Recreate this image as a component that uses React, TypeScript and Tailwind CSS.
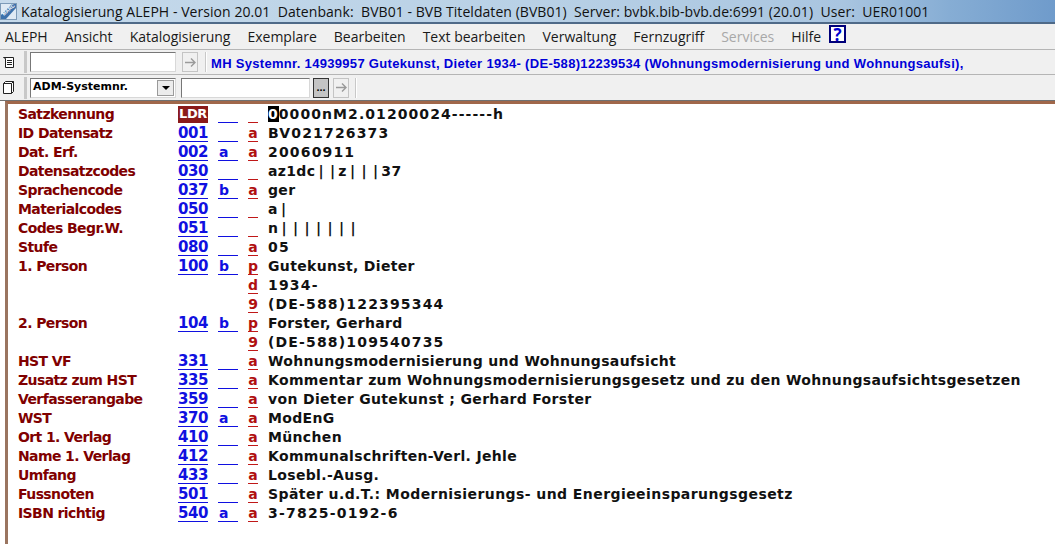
import React from 'react';

const menus = ['ALEPH', 'Ansicht', 'Katalogisierung', 'Exemplare', 'Bearbeiten', 'Text bearbeiten', 'Verwaltung', 'Fernzugriff', 'Services', 'Hilfe'];

const TEXT = 'tracking-[0.33px]';
const NUM = 'tracking-[1.15px]';

const rows: [string, string, string, string, string, string][] = [
  ['Satzkennung', 'LDR', '', '', '00000nM2.01200024------h', 'tracking-[1.07px]'],
  ['ID Datensatz', '001', '', 'a', 'BV021726373', NUM],
  ['Dat. Erf.', '002', 'a', 'a', '20060911', NUM],
  ['Datensatzcodes', '030', '', '', 'az1dc||z|||37', TEXT],
  ['Sprachencode', '037', 'b', 'a', 'ger', TEXT],
  ['Materialcodes', '050', '', '', 'a|', TEXT],
  ['Codes Begr.W.', '051', '', '', 'n|||||||', TEXT],
  ['Stufe', '080', '', 'a', '05', NUM],
  ['1. Person', '100', 'b', 'p', 'Gutekunst, Dieter', TEXT],
  ['', '', '', 'd', '1934-', NUM],
  ['', '', '', '9', '(DE-588)122395344', NUM],
  ['2. Person', '104', 'b', 'p', 'Forster, Gerhard', TEXT],
  ['', '', '', '9', '(DE-588)109540735', NUM],
  ['HST VF', '331', '', 'a', 'Wohnungsmodernisierung und Wohnungsaufsicht', TEXT],
  ['Zusatz zum HST', '335', '', 'a', 'Kommentar zum Wohnungsmodernisierungsgesetz und zu den Wohnungsaufsichtsgesetzen', TEXT],
  ['Verfasserangabe', '359', '', 'a', 'von Dieter Gutekunst ; Gerhard Forster', TEXT],
  ['WST', '370', 'a', 'a', 'ModEnG', TEXT],
  ['Ort 1. Verlag', '410', '', 'a', 'München', TEXT],
  ['Name 1. Verlag', '412', '', 'a', 'Kommunalschriften-Verl. Jehle', TEXT],
  ['Umfang', '433', '', 'a', 'Losebl.-Ausg.', TEXT],
  ['Fussnoten', '501', '', 'a', 'Später u.d.T.: Modernisierungs- und Energieeinsparungsgesetz', 'tracking-[0.42px]'],
  ['ISBN richtig', '540', 'a', 'a', '3-7825-0192-6', 'tracking-[1.2px]'],
];

const GoButton = ({ className }: { className: string }) => (
  <div className={`flex h-[20px] w-[16px] items-center justify-center border border-[#c4c4c4] bg-[#f0f0f0] ${className}`}>
    <svg width="13" height="11" viewBox="0 0 13 11" fill="none" stroke="#9a9a9a" strokeWidth="1.4">
      <path d="M1 5.5h10M7 1.5l4 4-4 4" />
    </svg>
  </div>
);

// pipes in the coded fields sit wider apart than the letters
const FieldValue = ({ value }: { value: string }) => (
  <>
    {value.split('').map((ch, i) =>
      ch === '|' ? <span key={i} className="inline-block w-[11.5px] text-center tracking-normal">|</span> : <span key={i}>{ch}</span>
    )}
  </>
);

export default function App() {
  return (
    <div className="flex h-[544px] w-[1055px] flex-col overflow-hidden bg-white font-['Liberation_Sans',sans-serif]">
      {/* Title bar */}
      <div className="flex h-[24px] items-center border-b-2 border-[#4f6a88] bg-[linear-gradient(90deg,#c6daeb_0%,#b9d1e6_50%,#a9c5e0_80%,#86add4_90%,#6f9bcb_100%)]">
        <svg className="shrink-0" width="18" height="20" viewBox="0 0 18 20">
          <rect x="0.5" y="2.5" width="16" height="16" fill="#dfeaf4" stroke="#7d9bb8" />
          <path d="M1 14L12 3h4v4L6 18H1z" fill="#3c72ac" />
          <text x="4" y="15" fontSize="5" fontWeight="700" fill="#fff" transform="rotate(-42 4 15)" fontFamily="Liberation Sans, sans-serif">MARC</text>
        </svg>
        <span className="ml-[3px] whitespace-nowrap font-['Open_Sans',sans-serif] text-[14px] tracking-[0.055px] text-[#111]">
          Katalogisierung ALEPH - Version 20.01&nbsp; Datenbank:&nbsp; BVB01 - BVB Titeldaten (BVB01)&nbsp; Server: bvbk.bib-bvb.de:6991 (20.01)&nbsp; User:&nbsp; UER01001
        </span>
      </div>

      {/* Menu bar */}
      <div className="flex h-[26px] items-center border-b border-[#b5b5b5] bg-[#f0f0f0] pl-[5px] font-['Open_Sans',sans-serif] text-[14px] text-[#1a1a1a]">
        {menus.map((m) => (
          <span key={m} className={`mr-[17px] whitespace-nowrap ${m === 'Services' ? 'text-[#a8a8a8]' : ''}`}>{m}</span>
        ))}
        <span className="-ml-[9px] mb-[5px] flex h-[18px] w-[17px] items-center justify-center border-2 border-[#00007a] bg-white text-[17px] font-bold leading-none text-[#0000d0]">?</span>
      </div>

      {/* Toolbar 1 */}
      <div className="flex h-[25px] items-center border-b border-[#b5b5b5] bg-[#f0f0f0] pl-[2px]">
        <svg width="13" height="14" viewBox="0 0 13 14" fill="#fff" stroke="#222" strokeWidth="1">
          <path d="M3.5 3.5v9h8v-10H1.5zM5 5.5h5M5 7.5h5M5 9.5h5" />
        </svg>
        <div className="ml-[9px] h-[22px] w-[3px] bg-[#c8c8c8]" />
        <div className="ml-[3px] h-[20px] w-[146px] border border-[#d8d8d8] border-l-[#777] border-t-[#777] bg-white" />
        <GoButton className="ml-[6px]" />
        <div className="ml-[7px] h-[20px] w-[2px] border-l border-r border-l-[#c8c8c8] border-r-white" />
        <span className="ml-[4px] mt-[3px] whitespace-nowrap text-[13px] font-bold tracking-[0.31px] text-[#0000d8]">MH Systemnr. 14939957 Gutekunst, Dieter 1934- (DE-588)12239534 (Wohnungsmodernisierung und Wohnungsaufsi),</span>
      </div>

      {/* Toolbar 2 */}
      <div className="flex h-[25px] items-center bg-[#f0f0f0] pl-[2px]">
        <svg width="13" height="15" viewBox="0 0 13 15" fill="#fff" stroke="#222" strokeWidth="1">
          <path d="M1.5 3.5h8v10h-8zM1.5 3.5l2-2h8v10l-2 2M9.5 3.5l2-2" />
        </svg>
        <div className="ml-[9px] h-[22px] w-[3px] bg-[#c8c8c8]" />
        <div className="ml-[3px] flex h-[20px] w-[146px] items-center justify-between border border-[#d8d8d8] border-l-[#777] border-t-[#777] bg-white pl-[2px] pr-[1px] font-['DejaVu_Sans',sans-serif] text-[11px] font-bold text-black">
          <span>ADM-Systemnr.</span>
          <span className="flex h-[16px] w-[17px] items-center justify-center border border-[#9a9a9a] bg-[#ececec]">
            <span className="h-0 w-0 border-x-[4px] border-t-[4px] border-x-transparent border-t-black" />
          </span>
        </div>
        <div className="ml-[5px] h-[20px] w-[129px] border border-[#d8d8d8] border-l-[#777] border-t-[#777] bg-white" />
        <div className="ml-[3px] flex h-[20px] w-[16px] items-center justify-center border border-[#333] bg-[#c4c4c4] text-[11px] font-bold leading-none text-black">...</div>
        <GoButton className="ml-[4px]" />
        <div className="ml-[6px] h-[20px] w-[2px] border-l border-r border-l-[#c8c8c8] border-r-white" />
      </div>

      {/* Record */}
      <div className="flex-1 border-t border-[#707070] pl-[5px]">
        <div className="h-full border-l-[3px] border-t-[3px] border-[#a0674a] border-l-[#9a7560] pl-[10px] pt-[1px]">
          {rows.map((r, i) => (
            <div key={i} className="flex h-[19px] items-center whitespace-nowrap">
              <span className="w-[160px] font-['DejaVu_Sans',sans-serif] text-[14px] font-bold tracking-[-0.6px] text-[#800000]">{r[0]}</span>
              <span className={`h-[17px] w-[30px] border-b text-center font-['DejaVu_Sans',sans-serif] font-bold leading-[16px] ${r[1] === 'LDR' ? 'border-[#8b1a1a] bg-[#8b1a1a] text-[13px] tracking-[-0.4px] text-white' : r[1] ? 'border-[#1010e0] text-[15px] tracking-[-0.4px] text-[#1010e0]' : 'border-transparent'}`}>{r[1]}</span>
              <span className={`ml-[10px] h-[17px] w-[20px] border-b pl-[1px] font-['DejaVu_Sans',sans-serif] text-[14px] font-bold leading-[16px] text-[#1010e0] ${r[1] ? 'border-[#1010e0]' : 'border-transparent'}`}>{r[2]}</span>
              <span className="ml-[10px] h-[17px] w-[10px] border-b border-[#c01818] text-center font-['DejaVu_Sans',sans-serif] text-[14px] font-bold leading-[16px] text-[#b01010]">{r[3]}</span>
              <span className={`ml-[10px] font-['DejaVu_Sans',sans-serif] text-[14px] font-bold text-[#111] ${r[5]}`}>
                {r[1] === 'LDR' ? <><span className="bg-black text-white">0</span>{r[4].slice(1)}</> : <FieldValue value={r[4]} />}
              </span>
            </div>
          ))}
        </div>
      </div>
    </div>
  );
}
